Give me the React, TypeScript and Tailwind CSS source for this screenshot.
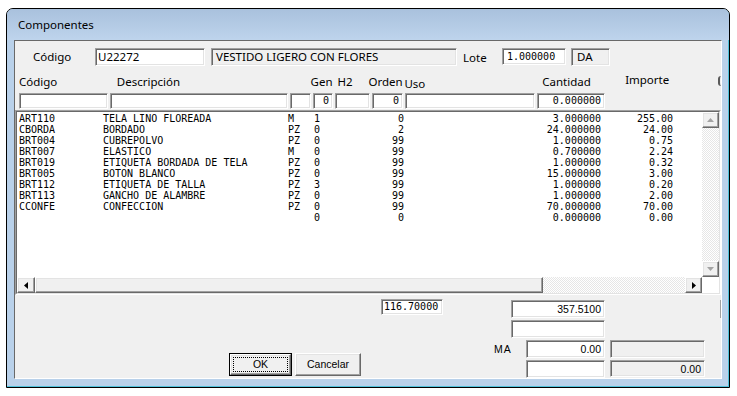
const sunken =
  "border border-t-[#a0a0a0] border-l-[#a0a0a0] border-r-white border-b-white shadow-[inset_1px_1px_0_#696969,inset_-1px_-1px_0_#e3e3e3]";
const raised =
  "bg-[#f0f0f0] border border-t-white border-l-white border-r-[#696969] border-b-[#696969] shadow-[inset_-1px_-1px_0_#a0a0a0,inset_1px_1px_0_#e3e3e3]";
const checker =
  "bg-white bg-[image:repeating-conic-gradient(#ffffff_0%_25%,#e6e6e6_0%_50%)] bg-[length:2px_2px]";
const ui = "font-['Noto_Sans',sans-serif] text-[11.5px]";
const mono = "font-['DejaVu_Sans_Mono',monospace] text-[10px]";
const ms = "font-['Liberation_Sans',Arial,sans-serif] text-[10.5px]";

const rows = [
  ["ART110", "TELA LINO FLOREADA", "M", "1", "0", "3.000000", "255.00"],
  ["CBORDA", "BORDADO", "PZ", "0", "2", "24.000000", "24.00"],
  ["BRT004", "CUBREPOLVO", "PZ", "0", "99", "1.000000", "0.75"],
  ["BRT007", "ELASTICO", "M", "0", "99", "0.700000", "2.24"],
  ["BRT019", "ETIQUETA BORDADA DE TELA", "PZ", "0", "99", "1.000000", "0.32"],
  ["BRT005", "BOTON BLANCO", "PZ", "0", "99", "15.000000", "3.00"],
  ["BRT112", "ETIQUETA DE TALLA", "PZ", "3", "99", "1.000000", "0.20"],
  ["BRT113", "GANCHO DE ALAMBRE", "PZ", "0", "99", "1.000000", "2.00"],
  ["CCONFE", "CONFECCION", "PZ", "0", "99", "70.000000", "70.00"],
  ["", "", "", "0", "0", "0.000000", "0.00"],
];

function Arrow({ dir, color }: { dir: "up" | "down" | "left" | "right"; color: string }) {
  const pts = {
    up: "0,4 3.5,0 7,4",
    down: "0,0 3.5,4 7,0",
    left: "4,0 0,3.5 4,7",
    right: "0,0 4,3.5 0,7",
  }[dir];
  const vertical = dir === "up" || dir === "down";
  return (
    <svg width={vertical ? 7 : 4} height={vertical ? 4 : 7} viewBox={vertical ? "0 0 7 4" : "0 0 4 7"}>
      <polygon points={pts} fill={color} />
    </svg>
  );
}

export default function App() {
  return (
    <div className="w-[737px] h-[396px] bg-white pt-[8px] pl-[6px]">
      <div className="w-[724px] h-[380px] border border-black rounded-t-[7px] bg-[#b9d1ea] shadow-[inset_-1px_-1px_0_#4fc1da] flex flex-col overflow-hidden">
        {/* title bar */}
        <div className={`h-[31px] shrink-0 pl-[11px] flex items-center bg-gradient-to-b from-[#a9c1dd] to-[#bed4ec] text-black ${ui}`}>
          Componentes
        </div>

        {/* client */}
        <div className="mx-[7px] h-[339px] shrink-0 border border-t-[#696969] border-l-[#696969] border-r-white border-b-white bg-[#f0f0f0] flex flex-col overflow-hidden text-black">
          {/* top row */}
          <div className={`mt-[7px] h-[18px] flex items-start ${ui}`}>
            <div className="ml-[18px] w-[62px] h-[18px] leading-[18px]">Código</div>
            <div className={`w-[110px] h-[18px] bg-white pl-[2px] leading-[16px] ${sunken}`}>U22272</div>
            <div className={`ml-[6px] w-[246px] h-[18px] pl-[4px] leading-[16px] ${sunken}`}>VESTIDO LIGERO CON FLORES</div>
            <div className="ml-[6px] w-[39px] h-[18px] leading-[20px]">Lote</div>
            <div className={`w-[64px] h-[17px] bg-white pl-[4px] leading-[15px] ${sunken} ${mono}`}>1.000000</div>
            <div className={`ml-[5px] w-[39px] h-[18px] pl-[5px] leading-[16px] ${sunken}`}>DA</div>
          </div>

          {/* column headers */}
          <div className={`h-[26px] flex items-end leading-[16px] ${ui}`}>
            <div className="ml-[4px] w-[98px] pb-[2px]">Código</div>
            <div className="w-[194px] pb-[2px]">Descripción</div>
            <div className="w-[27px] pb-[2px]">Gen</div>
            <div className="w-[31px] pb-[2px]">H2</div>
            <div className="w-[36px] pb-[2px]">Orden</div>
            <div className="w-[138px]">Uso</div>
            <div className="w-[83px] pb-[2px]">Cantidad</div>
            <div className="w-[93px] pb-[4px]">Importe</div>
            <div className="w-[3px] h-[10px] mb-[6px] border-l-2 border-[#5a5a5a] rounded-l-full" />
          </div>

          {/* filter inputs */}
          <div className={`mt-[1px] h-[16px] flex gap-[2px] leading-[14px] ${mono}`}>
            <div className={`ml-[4px] w-[89px] bg-white ${sunken}`} />
            <div className={`w-[178px] bg-white ${sunken}`} />
            <div className={`w-[21px] bg-white ${sunken}`} />
            <div className={`w-[20px] bg-white text-right pr-[3px] ${sunken}`}>0</div>
            <div className={`w-[35px] bg-white ${sunken}`} />
            <div className={`w-[31px] bg-white text-right pr-[3px] ${sunken}`}>0</div>
            <div className={`w-[130px] bg-white ${sunken}`} />
            <div className={`w-[68px] bg-white text-right pr-[3px] ${sunken}`}>0.000000</div>
          </div>

          {/* list */}
          <div className="mt-[1px] h-[185px] shrink-0 border border-t-[#a0a0a0] border-l-[#a0a0a0] border-r-white border-b-white">
            <div className="h-full border border-t-[#696969] border-l-[#696969] border-r-[#e3e3e3] border-b-[#e3e3e3] bg-white flex flex-col">
              <div className="flex-1 flex min-h-0">
                <div className={`flex-1 flex flex-col pt-[1px] ${mono}`}>
                  {rows.map((r, i) => (
                    <div key={i} className="flex h-[11px] leading-[11px] whitespace-pre">
                      <div className="w-[86px] pl-[2px]">{r[0]}</div>
                      <div className="w-[185px]">{r[1]}</div>
                      <div className="w-[26px]">{r[2]}</div>
                      <div className="w-[60px]">{r[3]}</div>
                      <div className="w-[30px] text-right">{r[4]}</div>
                      <div className="w-[197px] text-right">{r[5]}</div>
                      <div className="w-[72px] text-right">{r[6]}</div>
                    </div>
                  ))}
                </div>
                {/* vertical scrollbar */}
                <div className="w-[17px] flex flex-col">
                  <div className={`h-[16px] flex items-center justify-center ${raised}`}>
                    <Arrow dir="up" color="#a3a3a3" />
                  </div>
                  <div className={`flex-1 ${checker}`} />
                  <div className={`h-[16px] flex items-center justify-center ${raised}`}>
                    <Arrow dir="down" color="#a3a3a3" />
                  </div>
                </div>
              </div>
              {/* horizontal scrollbar */}
              <div className="h-[16px] flex shrink-0">
                <div className={`w-[18px] flex items-center justify-center ${raised}`}>
                  <Arrow dir="left" color="#000000" />
                </div>
                <div className={`w-[508px] ${raised}`} />
                <div className={`flex-1 ${checker}`} />
                <div className={`w-[17px] flex items-center justify-center ${raised}`}>
                  <Arrow dir="right" color="#000000" />
                </div>
                <div className="w-[17px] bg-white" />
              </div>
            </div>
          </div>

          {/* bottom panel */}
          <div className="flex-1 flex items-start">
            <div className={`ml-[214px] mt-[58px] flex gap-[3px] ${ms}`}>
              <div className="w-[63px] h-[23px] border border-black">
                <div className={`h-full p-[2px] ${raised}`}>
                  <div className="h-full border border-dotted border-black flex items-center justify-center">OK</div>
                </div>
              </div>
              <div className={`w-[66px] h-[23px] flex items-center justify-center ${raised}`}>Cancelar</div>
            </div>
            <div className={`ml-[20px] mt-[4px] w-[62px] h-[16px] bg-white pl-[2px] leading-[14px] overflow-hidden whitespace-nowrap ${sunken} ${mono}`}>
              116.70000
            </div>
            <div className={`ml-[50px] mt-[5px] flex flex-col gap-[2px] ${ms}`}>
              <div className={`ml-[18px] w-[94px] h-[18px] bg-white text-right pr-[3px] leading-[16px] ${sunken}`}>357.5100</div>
              <div className={`ml-[18px] w-[94px] h-[18px] bg-white ${sunken}`} />
              <div className="flex">
                <div className="w-[33px] pl-[1px] pt-[2px] tracking-[1px]">MA</div>
                <div className={`w-[79px] h-[18px] bg-white text-right pr-[3px] leading-[16px] ${sunken}`}>0.00</div>
                <div className={`ml-[5px] w-[95px] h-[18px] ${sunken}`} />
              </div>
              <div className="flex">
                <div className={`ml-[33px] w-[79px] h-[18px] bg-white ${sunken}`} />
                <div className={`ml-[5px] w-[95px] h-[17px] text-right pr-[3px] leading-[16px] ${sunken}`}>0.00</div>
              </div>
            </div>
            <div className="ml-[15px] mt-[5px] w-[1px] h-[18px] bg-[#a0a0a0]" />
          </div>
        </div>
      </div>
    </div>
  );
}
